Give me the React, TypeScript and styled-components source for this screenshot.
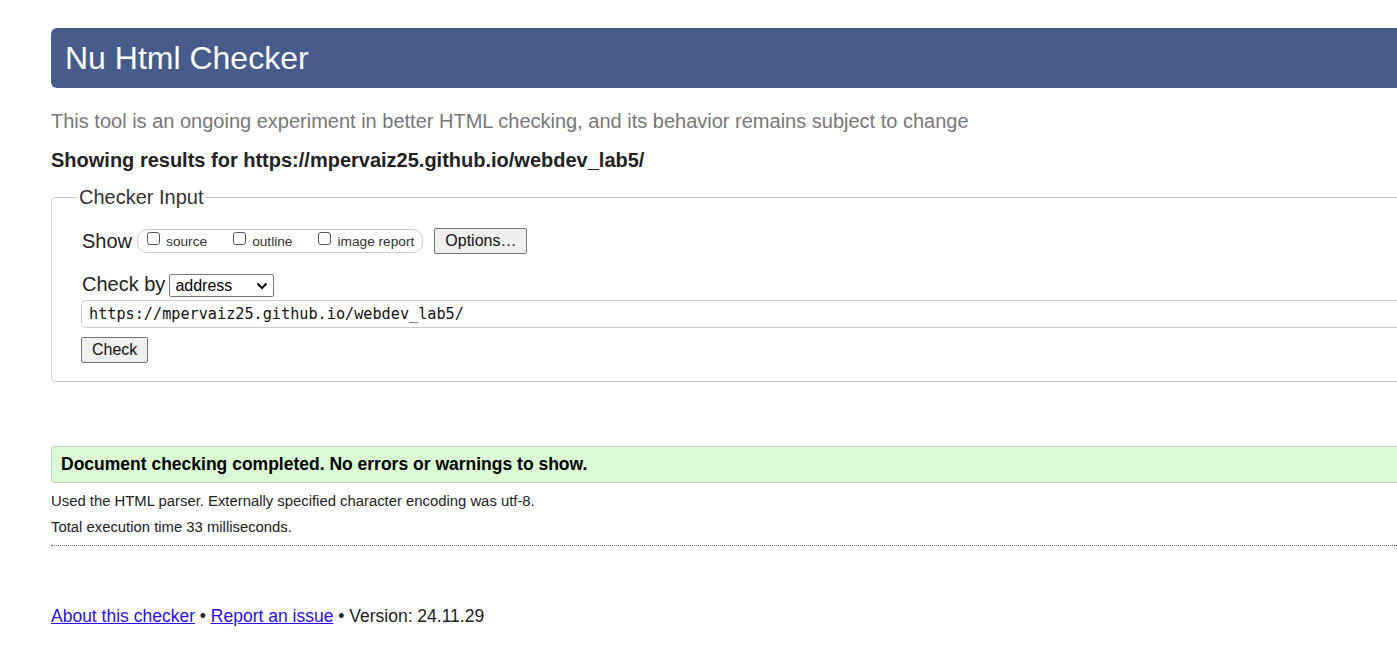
import React from "react";
import styled, { createGlobalStyle } from "styled-components";

const Global = createGlobalStyle`
  html, body { margin: 0; padding: 0; background: #fff; overflow: hidden; }
  body { font-family: "Liberation Sans", Arial, sans-serif; color: #222; }
`;

const Page = styled.div`
  width: 1420px;
  padding: 28px 0 0 51px;
`;

const Header = styled.h1`
  margin: 0;
  height: 60px;
  display: flex;
  align-items: center;
  padding-left: 14px;
  background: #485c8c;
  color: #fff;
  font-weight: normal;
  font-size: 32px;
  border-radius: 6px 0 0 6px;
`;

const Intro = styled.p`
  margin: 20px 0 0;
  font-size: 20px;
  line-height: 26px;
  color: #777;
`;

const Showing = styled.p`
  margin: 13px 0 0;
  font-size: 20px;
  line-height: 26px;
  font-weight: bold;
  color: #222;
`;

const Fieldset = styled.fieldset`
  margin: 13px 0 0;
  padding: 19px 0 18px 30px;
  border: 1px solid #ccc;
  border-radius: 4px;
  min-width: 0;
`;

const Legend = styled.legend`
  font-size: 20px;
  color: #333;
  padding: 0 1px;
  margin-left: -4px;
`;

const Row = styled.div`
  display: flex;
  align-items: center;
  gap: 5px;
  font-size: 20px;
  color: #222;
`;

const ShowRow = styled(Row)`
  gap: 5px;
`;

const Group = styled.div`
  display: flex;
  align-items: center;
  height: 22px;
  padding: 0 8px 0 9px;
  border: 1px solid #ccc;
  border-radius: 10px;
  gap: 26px;
`;

const CheckLabel = styled.label`
  display: flex;
  align-items: center;
  gap: 6px;
  font-size: 13.7px;
  color: #333;
`;

const Box = styled.span`
  width: 11px;
  height: 11px;
  border: 1px solid #555;
  border-radius: 3px;
  margin-top: -6px;
`;

const Button = styled.button`
  font-family: "Liberation Sans", Arial, sans-serif;
  font-size: 16px;
  color: #111;
  background: #efefef;
  border: 1px solid #767676;
  border-radius: 2px;
  padding: 1px 10px;
  height: 26px;
`;

const OptionsButton = styled(Button)`
  margin-left: 6px;
`;

const CheckByRow = styled(Row)`
  margin-top: 17px;
  gap: 4px;
`;

const Select = styled.div`
  width: 105px;
  height: 23px;
  box-sizing: border-box;
  border: 1px solid #767676;
  border-radius: 2px;
  display: flex;
  align-items: center;
  justify-content: space-between;
  padding: 0 5px 0 5px;
  font-size: 16px;
  color: #000;
  margin-top: 3px;
`;

const UrlInput = styled.div`
  margin: 3px 0 0 -1px;
  height: 28px;
  box-sizing: border-box;
  border: 1px solid #ccc;
  border-right: none;
  border-radius: 5px 0 0 5px;
  display: flex;
  align-items: center;
  padding-left: 7px;
  font-family: "DejaVu Sans Mono", "Liberation Mono", monospace;
  font-size: 15.2px;
  color: #111;
`;

const CheckButton = styled(Button)`
  margin: 9px 0 0 -1px;
  padding: 0 10px;
  height: 26px;
  display: block;
`;

const Result = styled.div`
  margin-top: 64px;
  height: 37px;
  box-sizing: border-box;
  background: #dafad4;
  border: 1px solid #ccc;
  border-right: none;
  border-radius: 4px 0 0 4px;
  display: flex;
  align-items: center;
  padding-left: 9px;
  font-size: 17.5px;
  font-weight: bold;
  color: #000;
`;

const Detail = styled.p`
  margin: 0;
  font-size: 14.85px;
  line-height: 26px;
  color: #222;
`;

const FirstDetail = styled(Detail)`
  margin-top: 5px;
`;

const Rule = styled.hr`
  margin: 5px 0 0;
  border: none;
  border-top: 1px dotted #666;
`;

const Footer = styled.p`
  margin: 60px 0 0;
  font-size: 17.5px;
  color: #222;
`;

const Link = styled.a`
  color: #2a10f0;
  text-decoration: underline;
`;

const Chevron = () => (
  <svg width="12" height="8" viewBox="0 0 12 8">
    <path d="M1.5 1.5 L6 6 L10.5 1.5" fill="none" stroke="#000" strokeWidth="2" />
  </svg>
);

export default function App() {
  return (
    <Page>
      <Global />
      <Header>Nu Html Checker</Header>
      <Intro>This tool is an ongoing experiment in better HTML checking, and its behavior remains subject to change</Intro>
      <Showing>Showing results for https://mpervaiz25.github.io/webdev_lab5/</Showing>
      <Fieldset>
        <Legend>Checker Input</Legend>
        <ShowRow>
          <span>Show</span>
          <Group>
            <CheckLabel><Box />source</CheckLabel>
            <CheckLabel><Box />outline</CheckLabel>
            <CheckLabel><Box />image report</CheckLabel>
          </Group>
          <OptionsButton>Options…</OptionsButton>
        </ShowRow>
        <CheckByRow>
          <span>Check by</span>
          <Select>
            <span>address</span>
            <Chevron />
          </Select>
        </CheckByRow>
        <UrlInput>https://mpervaiz25.github.io/webdev_lab5/</UrlInput>
        <CheckButton>Check</CheckButton>
      </Fieldset>
      <Result>Document checking completed. No errors or warnings to show.</Result>
      <FirstDetail>Used the HTML parser. Externally specified character encoding was utf-8.</FirstDetail>
      <Detail>Total execution time 33 milliseconds.</Detail>
      <Rule />
      <Footer>
        <Link href="#">About this checker</Link> • <Link href="#">Report an issue</Link> • Version: 24.11.29
      </Footer>
    </Page>
  );
}
